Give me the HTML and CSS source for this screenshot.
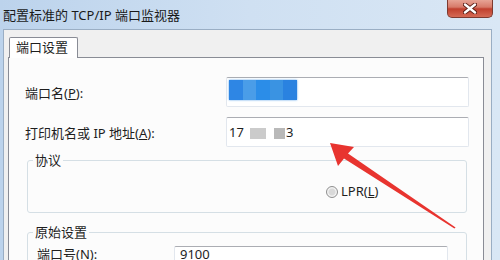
FILE: index.html
```html
<!DOCTYPE html>
<html lang="zh-CN">
<head>
  <meta charset="UTF-8"/>
  <title>配置标准的 TCP/IP 端口监视器</title>
  <link rel="stylesheet" href="styles.css">
</head>
<body>
  <div class="window">
    <div class="titlebar">
      <span class="title">配置标准的 TCP/IP 端口监视器</span>
      <div class="close">
        <svg width="14" height="11" viewBox="0 0 14 11"><path d="M2 1.5 L12 9.5 M12 1.5 L2 9.5" stroke="#5a1c14" stroke-width="4.2" stroke-linecap="round"/><path d="M2 1.5 L12 9.5 M12 1.5 L2 9.5" stroke="#fff" stroke-width="2.4" stroke-linecap="round"/></svg>
      </div>
    </div>

    <div class="client">
      <div class="tabs">
        <div class="tab">端口设置</div>
      </div>
      <div class="panel">
        <div class="field">
          <label>端口名(<u>P</u>):</label>
          <div class="textbox"><span class="blur-blue"></span></div>
        </div>
        <div class="field">
          <label>打印机名或 IP 地址(<u>A</u>):</label>
          <div class="textbox">17<span class="blur-gray"></span><span class="blur-gray short"></span>3</div>
        </div>

        <fieldset class="group protocol">
          <legend>协议</legend>
          <label class="radio"><span class="radio-dot"></span><span>LPR(<u>L</u>)</span></label>
        </fieldset>

        <fieldset class="group raw">
          <legend>原始设置</legend>
          <div class="field small">
            <label>端口号(<u>N</u>):</label>
            <div class="textbox">9100</div>
          </div>
        </fieldset>
      </div>
    </div>

    <!-- red arrow drawn over the screenshot -->
    <svg class="arrow" width="500" height="260" viewBox="0 0 500 260">
      <polygon points="330,143 354,147 348,153.5 455.6,227.4 454.4,228.6 344,158.5 338,166" fill="#e8342f"/>
    </svg>
  </div>
</body>
</html>
```

FILE: styles.css
```css
* { box-sizing:border-box; margin:0; padding:0 }
html, body {
  width:100%; height:100%; overflow:hidden;
  font-family:'Noto Sans', 'Noto Sans CJK SC', sans-serif;
  font-size:13px; color:#1e1e1e;
}
.window {
  position:relative; width:500px; height:260px; overflow:hidden;
  background:linear-gradient(90deg, #bcd3ec 0%, #cfe0f2 50%, #d9e7f5 100%);
}
.titlebar { height:29px; display:flex; align-items:center; padding-left:3px }
.title { line-height:15px; margin-top:1px; color:#1a1a1a }
.close {
  position:absolute; left:447px; top:-1px; width:46px; height:19px;
  display:flex; justify-content:center; align-items:center;
  border:1px solid #7d3a30; border-top:none; border-radius:0 0 5px 5px;
  background:linear-gradient(#e9a99b 0%, #d77a69 45%, #c0402e 55%, #d56a55 100%);
}
.client {
  margin:0 8px 0 3px; height:231px;
  background:#f0f0f0; border:1px solid #9aaec4; border-bottom:none;
  padding:7px 7px 0 4px;
}
.tabs { display:flex; height:20px; position:relative; z-index:1 }
.tab {
  margin-left:1px; width:69px; height:21px;
  background:#fff; border:1px solid #898c95; border-bottom:none;
  border-radius:2px 2px 0 0;
  padding-left:6px; line-height:19px;
}
.panel {
  background:#fcfcfc; border:1px solid #898c95; border-bottom:none;
  height:210px;
  padding:19px 14px 0 16px;
}
.field { display:flex; align-items:center; justify-content:space-between }
.field + .field { margin-top:10px }
.textbox {
  width:243px; height:30px;
  border:1px solid #e2e7ee; border-top-color:#abadb3; border-radius:2px;
  background:#fff; padding:0 2px;
  display:flex; align-items:center; line-height:15px;
}
.blur-blue {
  width:68px; height:20px; margin-top:-4px;
  background:
    linear-gradient(90deg, #2e86e4 0 20%, #4a9de8 20% 40%, #2b8de8 40% 60%, #3a93e2 60% 80%, #2a82e0 80% 100%);
  box-shadow:0 0 2px #5aa2ea;
}
.blur-gray { width:16px; height:11px; margin:3px 8px 0 6px; background:#cbcbcb }
.blur-gray.short { width:11px; margin:3px 1px 0 0; background:#b9b9b9 }
.group {
  border:1px solid #d5dfe5; border-radius:3px;
  padding:0 5px; margin:6px 2px 0 2px;
}
.group legend { padding:0 2px; line-height:15px }
.protocol { padding-top:16px; padding-bottom:13px }
.radio { display:flex; align-items:center; gap:3px; margin-left:293px; line-height:15px }
.radio-dot {
  width:12px; height:12px; border-radius:50%;
  border:1px solid #8f8f8f;
  background:radial-gradient(circle, #d9d9d9 0 40%, #f4f4f4 60%, #e0e0e0 100%);
}
.raw { margin-top:12px; height:60px }
.field.small { margin-top:6px; padding-left:4px; margin-right:13px; align-items:flex-start }
.field.small label { margin-top:1px; line-height:15px }
.field.small .textbox { width:274px; padding:0 0 0 5px; align-items:flex-start }
.arrow { position:absolute; left:0; top:0; pointer-events:none }
```
